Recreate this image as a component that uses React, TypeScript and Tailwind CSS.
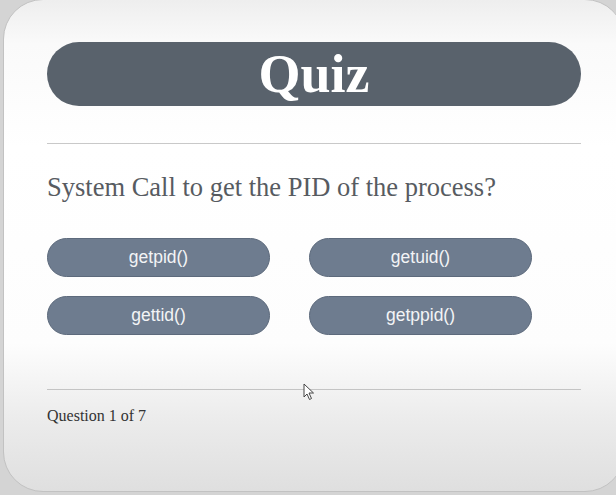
export default function App() {
  const options = ["getpid()", "getuid()", "gettid()", "getppid()"]

  return (
    <div className="relative w-[616px] h-[495px] overflow-hidden bg-[#d4d4d4]">
      {/* Card */}
      <div className="ml-[3px] -mt-px w-[622px] h-[493px] rounded-[40px] border border-[#c2c2c2] bg-[linear-gradient(to_bottom,#eeeeee_0%,#fafafa_9%,#ffffff_30%,#fdfdfd_70%,#ececec_85%,#dfdfdf_100%)] pl-[43px] pt-[42px]">
        <div className="w-[534px]">
          {/* Header */}
          <div className="h-[64px] rounded-full bg-[#59626c] flex items-center justify-center">
            <span className="text-white font-bold text-[54px] leading-none font-['Liberation_Serif',serif]">Quiz</span>
          </div>

          <div className="mt-[37px] h-px bg-[#c9c9c9]" />

          {/* Question */}
          <div className="mt-[28px] h-[30px] leading-[30px] text-[26.5px] text-[#575b61] font-['Liberation_Serif',serif] whitespace-nowrap">
            System Call to get the PID of the process?
          </div>

          {/* Options */}
          <div className="mt-[36px] grid grid-cols-[223px_223px] gap-x-[39px] gap-y-[19px]">
            {options.map((o) => (
              <button
                key={o}
                className="h-[39px] rounded-full bg-[#6e7c8f] border border-[#5d6a7c] text-[#f3f4f6] text-[17.5px] font-['Liberation_Sans',sans-serif] flex items-center justify-center"
              >
                {o}
              </button>
            ))}
          </div>

          <div className="mt-[54px] h-px bg-[#c4c4c4]" />

          <div className="mt-[16px] h-[20px] leading-[20px] text-[16px] text-[#333333] font-['Liberation_Serif',serif]">
            Question 1 of 7
          </div>
        </div>
      </div>

      {/* Mouse cursor */}
      <svg className="absolute left-[303px] top-[383px]" width="12" height="18" viewBox="0 0 12 18">
        <path d="M1 1 L1 14 L4 11 L6.5 16.5 L8.5 15.5 L6 10 L10.5 10 Z" fill="#ffffff" stroke="#444444" strokeWidth="1" strokeLinejoin="round" />
      </svg>
    </div>
  )
}
